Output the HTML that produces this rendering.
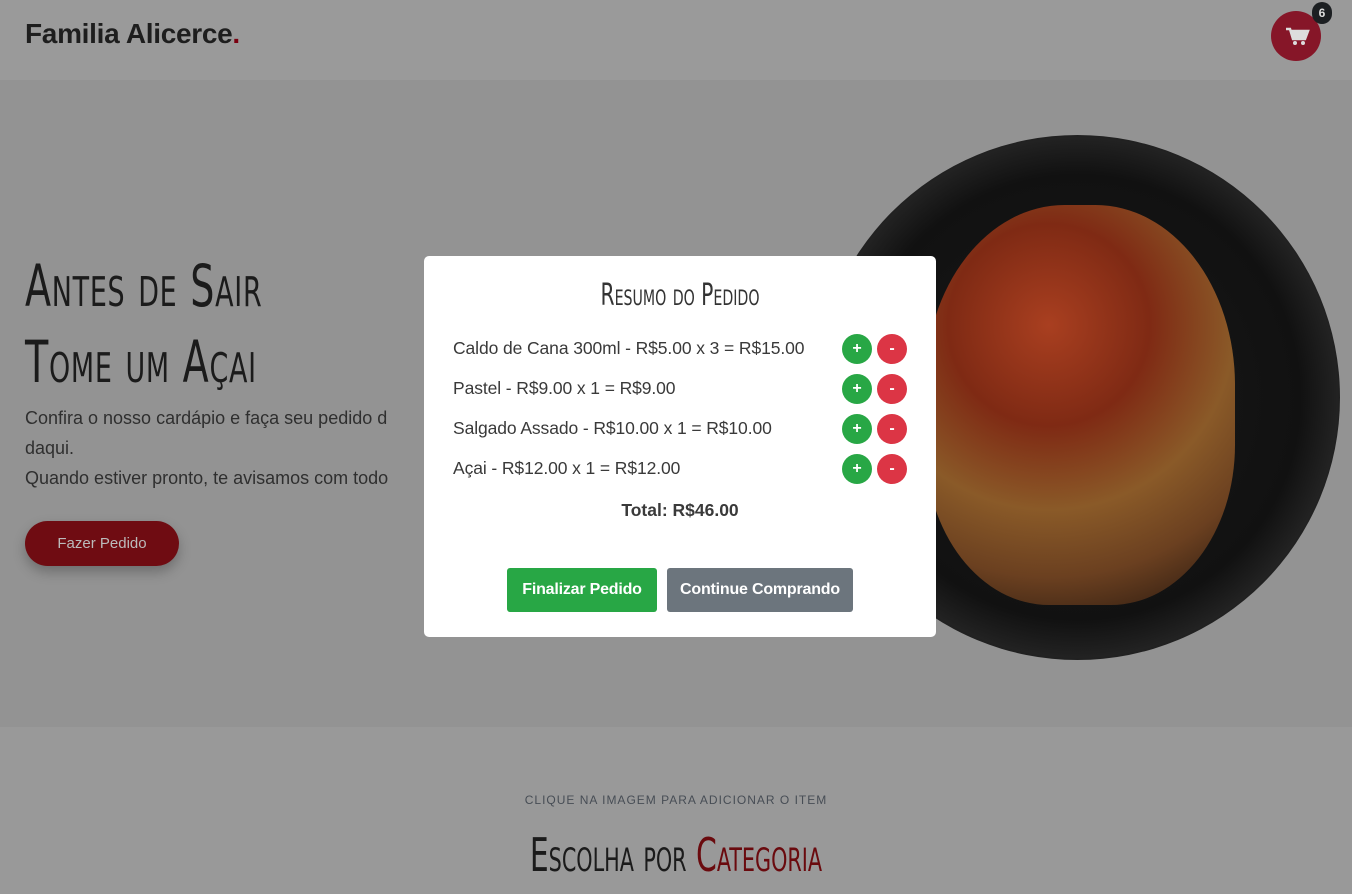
<!DOCTYPE html>
<html><head><meta charset="utf-8"><style>
*{margin:0;padding:0;box-sizing:border-box}
body{width:1352px;height:894px;overflow:hidden;background:#999;font-family:"Liberation Sans",sans-serif;position:relative}
.hdr{position:absolute;left:0;top:0;width:1352px;height:80px;background:#9a9a9a}
.logo{position:absolute;left:25px;top:18px;font-size:28px;font-weight:bold;color:#1e1e1e;letter-spacing:-0.3px}
.logo span{color:#7a0010}
.cart{position:absolute;left:1271px;top:11px;width:50px;height:50px;border-radius:50%;background:#861628}
.badge{position:absolute;left:1312px;top:2px;width:20px;height:22px;border-radius:10px;background:#1c1f22;color:#ddd;font-size:12px;font-weight:bold;text-align:center;line-height:22px}
.hero{position:absolute;left:0;top:80px;width:1352px;height:647px;background:#939393}
.amatic{font-family:"DejaVu Sans Condensed","Liberation Sans Narrow",sans-serif;font-variant:small-caps;transform-origin:left top}
.h1{position:absolute;left:25px;top:248px;font-size:58px;color:#1b1b1b;line-height:76px;transform:scaleX(.73);letter-spacing:1px;font-weight:normal;white-space:nowrap}
.p{position:absolute;left:25px;top:403px;font-size:18px;color:#2f2f2f;line-height:30px}
.btn1{position:absolute;left:25px;top:521px;width:154px;height:45px;border-radius:23px;background:#6f0c12;color:#bbb;font-size:15px;text-align:center;line-height:45px;box-shadow:0 6px 12px rgba(0,0,0,.25)}
.plate{position:absolute;left:815px;top:135px;width:525px;height:525px;border-radius:50%;background:radial-gradient(circle,#1a1a1a 0,#111 60%,#222 70%,#0d0d0d 78%,#1e1e1e 88%,#0c0c0c 100%)}
.food{position:absolute;left:925px;top:205px;width:310px;height:400px;border-radius:45% 45% 40% 40%;background:radial-gradient(circle at 40% 30%,#a93f20 0,#7f2a14 30%,#8a5a28 55%,#6b4020 75%,rgba(40,20,10,.6) 100%)}
.sec{position:absolute;left:0;top:727px;width:1352px;height:167px;background:#999}
.small{position:absolute;left:0;width:1352px;top:793px;text-align:center;font-size:12px;letter-spacing:1px;color:#474d55}
.h2w{position:absolute;left:0;width:1352px;top:828px;text-align:center}
.h2{display:inline-block;font-size:46px;color:#1b1b1b;transform:scaleX(.72);transform-origin:center top;white-space:nowrap}
.h2 span{color:#6a0a0e}
.modal{position:absolute;left:424px;top:256px;width:512px;height:381px;background:#fff;border-radius:5px}
.mt{position:absolute;left:0;width:512px;top:22px;text-align:center;font-size:30px;color:#333}
.mt div{display:inline-block;transform:scaleX(.75);transform-origin:center top;white-space:nowrap}
.row{position:absolute;left:29px;font-size:17.5px;color:#3a3a3a;letter-spacing:-.1px}
.b{position:absolute;width:30px;height:30px;border-radius:50%;color:#fff;font-weight:bold;font-size:16px;text-align:center;line-height:29px}
.g{background:#28a745;left:418px}.r{background:#dc3545;left:453px}
.tot{position:absolute;left:0;width:512px;top:244px;text-align:center;font-weight:bold;font-size:17.5px;color:#3a3a3a}
.f{position:absolute;top:312px;height:44px;border-radius:3px;color:#fff;font-weight:bold;font-size:16px;text-align:center;line-height:44px;letter-spacing:-.2px}
</style></head><body>
<div class="hdr"></div>
<div class="logo">Familia Alicerce<span>.</span></div>
<div class="cart"><svg width="50" height="50" viewBox="0 0 50 50"><path d="M15 18h4l3 10h12l3-8H20" fill="none" stroke="#ddd" stroke-width="2.5"/><rect x="21" y="21" width="14" height="6" fill="#ddd"/><circle cx="24" cy="32" r="2" fill="#ddd"/><circle cx="32" cy="32" r="2" fill="#ddd"/></svg></div>
<div class="badge">6</div>
<div class="hero"></div>
<div class="plate"></div><div class="food"></div>
<div class="h1 amatic">Antes de Sair<br>Tome um Açai</div>
<div class="p">Confira o nosso cardápio e faça seu pedido d<br>daqui.<br>Quando estiver pronto, te avisamos com todo</div>
<div class="btn1">Fazer Pedido</div>
<div class="sec"></div>
<div class="small">CLIQUE NA IMAGEM PARA ADICIONAR O ITEM</div>
<div class="h2w"><div class="h2 amatic">Escolha por <span>Categoria</span></div></div>
<div class="modal">
<div class="mt amatic"><div>Resumo do Pedido</div></div>
<div class="row" style="top:82px">Caldo de Cana 300ml - R$5.00 x 3 = R$15.00</div><div class="b g" style="top:78px">+</div><div class="b r" style="top:78px">-</div>
<div class="row" style="top:122px">Pastel - R$9.00 x 1 = R$9.00</div><div class="b g" style="top:118px">+</div><div class="b r" style="top:118px">-</div>
<div class="row" style="top:162px">Salgado Assado - R$10.00 x 1 = R$10.00</div><div class="b g" style="top:158px">+</div><div class="b r" style="top:158px">-</div>
<div class="row" style="top:202px">Açai - R$12.00 x 1 = R$12.00</div><div class="b g" style="top:198px">+</div><div class="b r" style="top:198px">-</div>
<div class="tot">Total: R$46.00</div>
<div class="f" style="left:83px;width:150px;background:#28a745">Finalizar Pedido</div>
<div class="f" style="left:243px;width:186px;background:#6c757d">Continue Comprando</div>
</div>
</body></html>
